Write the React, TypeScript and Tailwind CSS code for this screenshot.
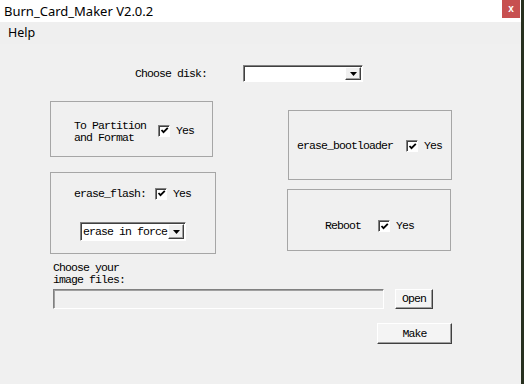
import React from "react";

const mono = { fontFamily: '"Liberation Mono", "DejaVu Sans Mono", monospace' };

function Check() {
  return (
    <span className="inline-flex w-[12px] h-[12px] bg-white border border-t-[#808080] border-l-[#808080] border-r-white border-b-white shadow-[inset_1px_1px_0_#404040] items-center justify-center">
      <svg width="9" height="9" viewBox="0 0 9 9">
        <path d="M1.5 4 L3.5 6.2 L7.8 1.8" fill="none" stroke="#000" strokeWidth="1.8" />
      </svg>
    </span>
  );
}

function Arrow() {
  return (
    <span className="flex w-[16px] h-full bg-[#f0f0f0] border border-t-white border-l-white border-r-[#404040] border-b-[#404040] shadow-[inset_-1px_-1px_0_#a0a0a0] items-center justify-center">
      <svg width="7" height="4" viewBox="0 0 7 4">
        <path d="M0 0 H7 L3.5 4 Z" fill="#000" />
      </svg>
    </span>
  );
}

function Yes() {
  return (
    <span className="flex items-center gap-[6px]">
      <Check />
      <span className="text-[11.5px] tracking-[-0.9px] text-black">Yes</span>
    </span>
  );
}

export default function App() {
  return (
    <div className="w-[524px] h-[384px] flex bg-[#f0f0f0] overflow-hidden" style={mono}>
      <div className="w-[521px] h-full flex flex-col">
        <div className="h-[22px] bg-white flex items-start justify-between">
          <span
            className="pl-[4px] pt-[2px] text-[13px] leading-[18px] text-black"
            style={{ fontFamily: '"Noto Sans", "Open Sans", sans-serif' }}
          >
            Burn_Card_Maker V2.0.2
          </span>
          <span className="mr-[1px] w-[18px] h-[18px] bg-[#c75050] flex items-center justify-center text-white text-[10px] font-bold leading-none" style={{ fontFamily: '"Liberation Sans", sans-serif' }}>
            x
          </span>
        </div>
        <div className="h-[22px] flex items-center bg-[#efefef]">
          <span
            className="pl-[8px] text-[12.5px] text-black"
            style={{ fontFamily: '"Noto Sans", "Open Sans", sans-serif' }}
          >
            Help
          </span>
        </div>

        <div className="flex items-center mt-[21px] h-[17px] pl-[135px] text-[11.5px] tracking-[-0.9px] text-black">
          <span className="w-[108px]">Choose disk:</span>
          <span className="flex w-[120px] h-[17px] bg-white border border-t-[#808080] border-l-[#808080] border-r-white border-b-white shadow-[inset_1px_1px_0_#404040] justify-end p-[1px]">
            <Arrow />
          </span>
        </div>

        <div className="flex mt-[19px] text-[11.5px] tracking-[-0.9px] text-black">
          <div className="flex flex-col ml-[50px] w-[166px]">
            <div className="w-[163px] h-[56px] border border-[#a6a6a6] flex items-start pt-[18px] pl-[23px]">
              <div className="flex flex-col leading-[12px] w-[84px]">
                <span>To Partition</span>
                <span>and Format</span>
              </div>
              <div className="mt-[2px]">
                <Yes />
              </div>
            </div>
            <div className="mt-[15px] w-[166px] h-[82px] border border-[#a6a6a6] flex flex-col pl-[23px] pt-[12px]">
              <div className="flex items-center">
                <span className="w-[81px]">erase_flash:</span>
                <Yes />
              </div>
              <div className="mt-[20px] ml-[6px] flex w-[106px] h-[19px] bg-white border border-t-[#808080] border-l-[#808080] border-r-white border-b-white shadow-[inset_1px_1px_0_#404040] p-[1px] items-center">
                <span className="flex-1 pl-[1px]">erase in force</span>
                <Arrow />
              </div>
            </div>
          </div>

          <div className="flex flex-col ml-[71px] mt-[9px]">
            <div className="ml-[1px] w-[164px] h-[70px] border border-[#a6a6a6] flex items-center pl-[8px] pt-[2px]">
              <span className="w-[109px]">erase_bootloader</span>
              <Yes />
            </div>
            <div className="mt-[9px] w-[164px] h-[62px] border border-[#a6a6a6] flex items-center pl-[37px] pt-[12px]">
              <span className="w-[53px]">Reboot</span>
              <Yes />
            </div>
          </div>
        </div>

        <div className="mt-[8px] ml-[53px] flex flex-col leading-[12px] text-[11.5px] tracking-[-0.9px] text-black">
          <span>Choose your</span>
          <span>image files:</span>
        </div>

        <div className="mt-[3px] ml-[53px] flex items-center">
          <span className="w-[331px] h-[20px] bg-[#f0f0f0] border border-t-[#808080] border-l-[#808080] border-r-white border-b-white shadow-[inset_1px_1px_0_#a0a0a0]" />
          <span className="ml-[11px] w-[38px] h-[20px] flex items-center justify-center bg-[#f4f4f4] border border-t-white border-l-white border-r-[#404040] border-b-[#404040] shadow-[inset_-1px_-1px_0_#a0a0a0] text-[11.5px] tracking-[-0.9px] text-black">
            Open
          </span>
        </div>

        <div className="mt-[14px] ml-[377px] w-[75px] h-[21px] flex items-center justify-center bg-[#f4f4f4] border border-t-white border-l-white border-r-[#404040] border-b-[#404040] shadow-[inset_-1px_-1px_0_#a0a0a0] text-[11.5px] tracking-[-0.9px] text-black">
          Make
        </div>
      </div>
      <div className="w-[3px] h-full bg-[#27301f]" />
    </div>
  );
}
